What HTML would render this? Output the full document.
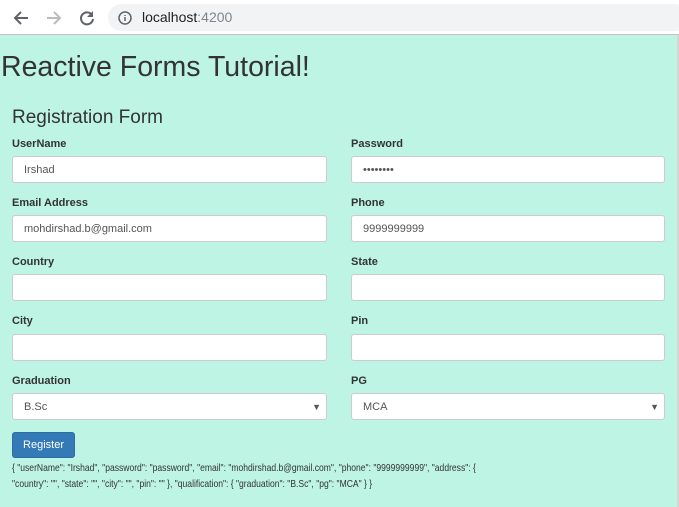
<!DOCTYPE html>
<html><head><style>
*{box-sizing:border-box;margin:0;padding:0}
body{width:679px;height:507px;overflow:hidden;font-family:"Liberation Sans",sans-serif;background:#bdf4e3;color:#333;position:relative}
.bar{position:absolute;left:0;top:0;width:679px;height:35px;background:#fff;border-bottom:1px solid #c4c4c4}
.url{position:absolute;left:108px;top:4px;width:580px;height:27px;border-radius:14px;background:#f1f3f4;font-size:14px;line-height:27px;padding-left:34px;color:#202124}
.url span{color:#80868b}
.sb{position:absolute;right:0;top:35px;width:2px;height:472px;background:#d6d6d6}
h1{position:absolute;left:1px;top:51px;font-size:28.5px;font-weight:normal;color:#333}
h3{position:absolute;left:12px;top:107px;font-size:19px;font-weight:normal}
.lbl{position:absolute;font-size:11px;font-weight:bold}
.in{position:absolute;width:315px;height:27px;background:#fff;border:1px solid #ccc;border-radius:3px;font-size:11px;line-height:27px;padding-left:11px;color:#555}
.btn{position:absolute;left:12px;top:432px;width:63px;height:26px;background:#337ab7;border:1px solid #2e6da4;border-radius:3px;color:#fff;font-size:11px;line-height:24px;text-align:center}
.json{position:absolute;left:12px;top:460px;font-size:10.5px;line-height:16px;color:#333;width:800px;transform:scaleX(0.815);transform-origin:0 0}
.arr{position:absolute;right:5px;top:0;font-size:9px}
</style></head><body>
<div class="bar">
<svg style="position:absolute;left:12px;top:9px" width="18" height="18" viewBox="0 0 18 18"><path d="M16 9H3M9 3L3 9l6 6" stroke="#5f6368" stroke-width="2" fill="none"/></svg>
<svg style="position:absolute;left:45px;top:9px" width="18" height="18" viewBox="0 0 18 18"><path d="M2 9h13M9 3l6 6-6 6" stroke="#bbb" stroke-width="2" fill="none"/></svg>
<svg style="position:absolute;left:78px;top:9px" width="18" height="18" viewBox="0 0 18 18"><path d="M14 6A6 6 0 1 0 15 10" stroke="#5f6368" stroke-width="2" fill="none"/><path d="M15 2v6H9z" fill="#5f6368"/></svg>
<div class="url"><svg style="position:absolute;left:10px;top:7px" width="14" height="14" viewBox="0 0 14 14"><circle cx="7" cy="7" r="6" stroke="#5f6368" stroke-width="1.5" fill="none"/><path d="M7 6v4M7 4v1" stroke="#5f6368" stroke-width="1.5"/></svg>localhost<span>:4200</span></div>
</div>
<div class="sb"></div>
<h1>Reactive Forms Tutorial!</h1>
<h3>Registration Form</h3>
<div class="lbl" style="left:12px;top:138px">UserName</div><div class="lbl" style="left:351px;top:138px">Password</div>
<div class="in" style="left:12px;top:156px">Irshad</div><div class="in" style="left:351px;top:156px;width:314px">••••••••</div>
<div class="lbl" style="left:12px;top:197px">Email Address</div><div class="lbl" style="left:351px;top:197px">Phone</div>
<div class="in" style="left:12px;top:215px">mohdirshad.b@gmail.com</div><div class="in" style="left:351px;top:215px;width:314px">9999999999</div>
<div class="lbl" style="left:12px;top:256px">Country</div><div class="lbl" style="left:351px;top:256px">State</div>
<div class="in" style="left:12px;top:274px"></div><div class="in" style="left:351px;top:274px;width:314px"></div>
<div class="lbl" style="left:12px;top:315px">City</div><div class="lbl" style="left:351px;top:315px">Pin</div>
<div class="in" style="left:12px;top:334px"></div><div class="in" style="left:351px;top:334px;width:314px"></div>
<div class="lbl" style="left:12px;top:375px">Graduation</div><div class="lbl" style="left:351px;top:375px">PG</div>
<div class="in" style="left:12px;top:393px">B.Sc<span class="arr">▼</span></div><div class="in" style="left:351px;top:393px;width:314px">MCA<span class="arr">▼</span></div>
<div class="btn">Register</div>
<div class="json">{ "userName": "Irshad", "password": "password", "email": "mohdirshad.b@gmail.com", "phone": "9999999999", "address": {<br>"country": "", "state": "", "city": "", "pin": "" }, "qualification": { "graduation": "B.Sc", "pg": "MCA" } }</div>
</body></html>
